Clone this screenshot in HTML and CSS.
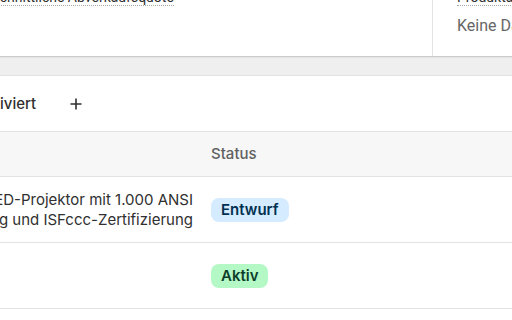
FILE: index.html
```html
<!DOCTYPE html>
<html lang="de">
<head>
<meta charset="utf-8">
<title>Produkte</title>
<link rel="stylesheet" href="styles.css">
</head>
<body>
<div class="page">
  <section class="summary">
    <div class="metric">
      <span class="metric-title">Umsatz</span>
      <span class="metric-value">0,00 €</span>
    </div>
    <div class="metric">
      <span class="metric-title">Durchschnittliche Abverkaufsquote</span>
    </div>
    <div class="metric metric-bordered">
      <span class="metric-title">Produktabverkauf</span>
      <span class="metric-value muted">Keine Daten</span>
    </div>
  </section>
  <div class="band"></div>
  <section class="panel">
    <div class="tabs">
      <span class="tab tab-active">Alle</span>
      <span class="tab">Aktiv</span>
      <span class="tab">Entwurf</span>
      <span class="tab">Archiviert</span>
      <button class="add" type="button" aria-label="Ansicht hinzufügen">
        <svg width="12" height="12" viewBox="0 0 12 12"><path d="M6 0.5v11M0.5 6h11" stroke="#303030" stroke-width="1.6" fill="none"/></svg>
      </button>
    </div>
    <div class="table">
      <div class="cell head">Beschreibung</div>
      <div class="cell head status">Status</div>

      <div class="cell desc">4K-Laser-LED-Projektor mit 1.000 ANSI<br>Lumen, HDR-Unterstützung und ISFccc-Zertifizierung</div>
      <div class="cell status"><span class="badge info">Entwurf</span></div>

      <div class="cell desc"></div>
      <div class="cell status"><span class="badge success">Aktiv</span></div>
    </div>
  </section>
</div>
</body>
</html>
```
FILE: styles.css
```css
* { box-sizing: border-box; }
html, body { margin: 0; padding: 0; }
body {
  width: 512px;
  height: 320px;
  overflow: hidden;
  background: #ffffff;
  font-family: Inter, "Noto Sans", sans-serif;
  color: #303030;
}
.page {
  width: 992px;
  margin-left: -400px;
  margin-top: -11px;
}
.summary {
  display: grid;
  grid-template-columns: 332px 500px 1fr;
  height: 68px;
  background: #fff;
  border-bottom: 1px solid #cbcbcb;
  font-family: Roboto, "Liberation Sans", sans-serif;
}
.metric {
  display: flex;
  flex-direction: column;
  align-items: flex-start;
  padding: 0 24px 18px 24px;
}
.metric-bordered { border-left: 1px solid #e3e3e3; }
.metric-title {
  font-size: 14px;
  line-height: 16px;
  color: #303030;
  border-bottom: 1px dotted #a8a8a8;
}
.metric-value {
  margin-top: 8px;
  font-size: 16px;
  line-height: 24px;
  color: #303030;
}
.metric-value.muted { color: #666666; }
.band {
  height: 19px;
  background: #efefef;
  box-shadow: inset 0 1px 2px rgba(0,0,0,0.05);
  border-bottom: 1px solid #e2e2e2;
}
.panel { background: #fff; }
.tabs {
  display: flex;
  align-items: center;
  height: 55px;
  padding-left: 150px;
  gap: 4px;
}
.tab {
  font-size: 15px;
  font-weight: 500;
  line-height: 20px;
  padding: 4px 12px;
  color: #303030;
}
.add {
  margin-left: 10px;
  width: 28px;
  height: 28px;
  padding: 0;
  border: 0;
  background: transparent;
  display: flex;
  align-items: center;
  justify-content: center;
}
.table {
  display: grid;
  grid-template-columns: 595px 1fr;
  border-top: 1px solid #e3e3e3;
}
.cell {
  display: flex;
  align-items: center;
  border-bottom: 1px solid #e3e3e3;
  font-size: 15px;
  line-height: 20px;
}
.head {
  height: 45px;
  background: #f7f7f7;
  color: #616161;
  font-weight: 500;
  padding-left: 16px;
}
.desc {
  height: 66px;
  justify-content: flex-end;
  text-align: right;
  padding-right: 2px;
  color: #303030;
}
.status { padding-left: 16px; height: 66px; }
.head.status { height: 45px; }
.badge {
  display: inline-block;
  font-size: 15px;
  line-height: 24px;
  font-weight: 600;
  padding: 0 10px;
  border-radius: 8px;
}
.badge.info { background: #d5ebff; color: #00304f; }
.badge.success { background: #b4f8c6; color: #0c3e2a; }
```
